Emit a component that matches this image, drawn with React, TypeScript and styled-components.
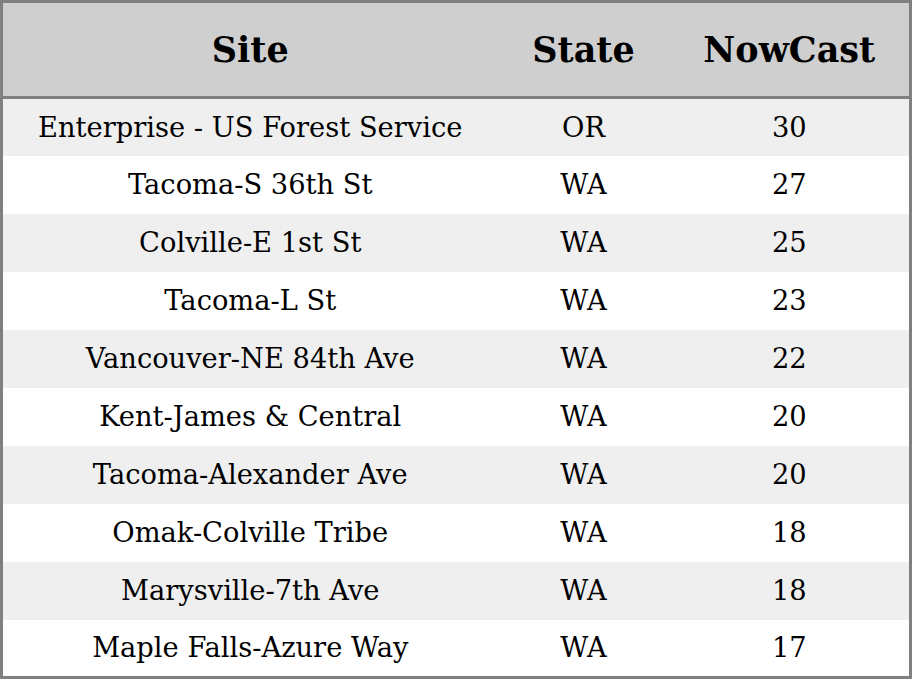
import React from 'react'
import styled, { createGlobalStyle } from 'styled-components'

// D A T A
interface SiteRow {
  site: string
  state: string
  nowcast: number
}

const rows: SiteRow[] = [
  { site: 'Enterprise - US Forest Service', state: 'OR', nowcast: 30 },
  { site: 'Tacoma-S 36th St', state: 'WA', nowcast: 27 },
  { site: 'Colville-E 1st St', state: 'WA', nowcast: 25 },
  { site: 'Tacoma-L St', state: 'WA', nowcast: 23 },
  { site: 'Vancouver-NE 84th Ave', state: 'WA', nowcast: 22 },
  { site: 'Kent-James & Central', state: 'WA', nowcast: 20 },
  { site: 'Tacoma-Alexander Ave', state: 'WA', nowcast: 20 },
  { site: 'Omak-Colville Tribe', state: 'WA', nowcast: 18 },
  { site: 'Marysville-7th Ave', state: 'WA', nowcast: 18 },
  { site: 'Maple Falls-Azure Way', state: 'WA', nowcast: 17 }
]

// C O M P O N E N T
export default function App () {
  return (
    <>
      <GlobalStyle />
      <StyledTable>
        <colgroup>
          <SiteCol />
          <StateCol />
          <col />
        </colgroup>
        <thead>
          <HeadRow>
            <HeadCell>Site</HeadCell>
            <HeadCell>State</HeadCell>
            <HeadCell>NowCast</HeadCell>
          </HeadRow>
        </thead>
        <tbody>
          {rows.map((row, i) => (
            <Row key={row.site} $odd={i % 2 === 0}>
              <Cell>{row.site}</Cell>
              <Cell>{row.state}</Cell>
              <Cell>{row.nowcast}</Cell>
            </Row>
          ))}
        </tbody>
      </StyledTable>
    </>
  )
}

// S T Y L E S
const GlobalStyle = createGlobalStyle`
  html, body, #root {
    margin: 0;
  }
  body {
    font-family: "DejaVu Serif", serif;
    color: #000;
    background: #fff;
    overflow: hidden;
  }
`

const StyledTable = styled.table`
  width: 912px;
  height: 679px;
  border-collapse: collapse;
  border: 3px solid #808080;
  table-layout: fixed;
`

const SiteCol = styled.col`
  width: 496px;
`

const StateCol = styled.col`
  width: 172px;
`

const HeadRow = styled.tr`
  height: 96px;
`

const HeadCell = styled.th`
  padding: 0;
  background: #cfcfcf;
  border-bottom: 3px solid #808080;
  font-size: 35px;
  font-weight: bold;
  text-align: center;
  vertical-align: middle;
`

const Row = styled.tr<{ $odd: boolean }>`
  height: 57px;
  background: ${p => (p.$odd ? '#efefef' : '#ffffff')};
`

const Cell = styled.td`
  padding: 0;
  text-align: center;
  vertical-align: middle;
  font-size: 27.3px;
`
